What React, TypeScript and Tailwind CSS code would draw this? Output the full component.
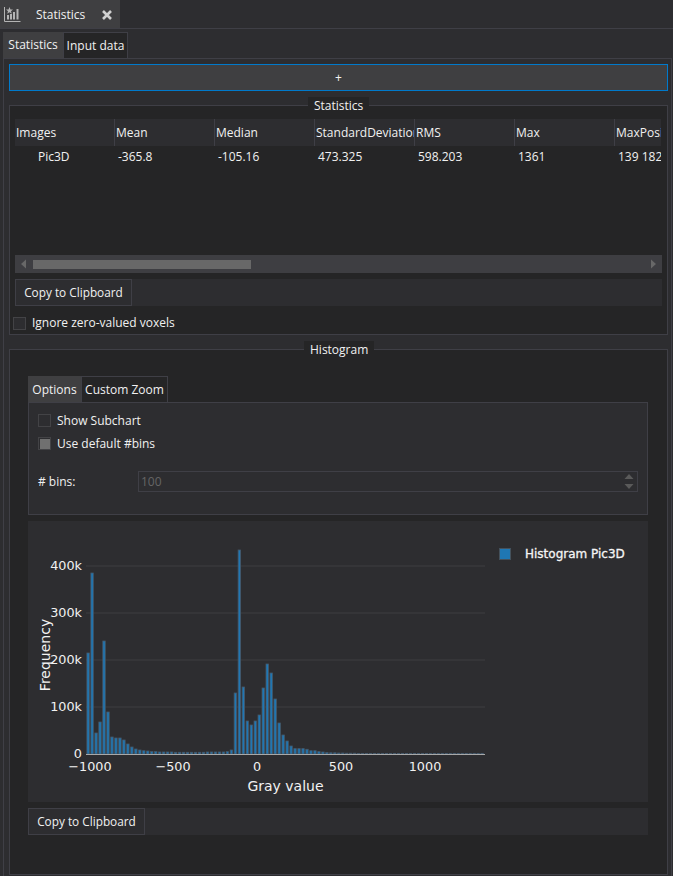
const COLUMNS = ['Images', 'Mean', 'Median', 'StandardDeviation', 'RMS', 'Max', 'MaxPosition']
const VALUES = ['Pic3D', '-365.8', '-105.16', '473.325', '598.203', '1361', '139 182 45']

// bar heights in px, read off the reference (one per bin)
const BARS = [
  101, 181, 21, 32, 113, 42, 17, 16, 16, 14, 10, 7, 5, 4, 3.3, 3, 2.4, 2.4, 2, 2, 2, 2, 1.7, 1.7, 1.7, 1.7, 1.7, 1.7, 1.7, 1.7, 2, 2, 2, 2, 2,
  2.4, 4, 61, 204, 67, 33, 29, 33, 39, 66, 90, 81, 55, 31, 19, 13, 8, 5.4, 5.4, 5.4, 4.7, 3.3, 3.3, 2.4, 2, 1.4, 1.2, 1.2, 1, 1, 0.8, 0.8, 0.8, 0.6, 0.6, 0.6,
  0.5, 0.5, 0.5, 0.5, 0.5, 0.5, 0.5, 0.5, 0.5, 0.5, 0.5, 0.5, 0.5, 0.5, 0.5, 0.5, 0.5, 0.5, 0.5, 0.5, 0.5, 0.5, 0.5, 0.5, 0.5, 0.5, 0.5, 0.5, 0.5,
]

const Y_TICKS = [
  { label: '0', y: 233 },
  { label: '100k', y: 186 },
  { label: '200k', y: 139 },
  { label: '300k', y: 92 },
  { label: '400k', y: 45 },
]

const X_TICKS = [
  { label: '−1000', x: 62 },
  { label: '−500', x: 145 },
  { label: '0', x: 229 },
  { label: '500', x: 313 },
  { label: '1000', x: 397 },
]

function Histogram() {
  return (
    <svg width="470" height="281" className="shrink-0 font-['DejaVu_Sans',sans-serif]">
      {Y_TICKS.slice(1).map((t) => (
        <line key={t.label} x1="58" x2="457" y1={t.y} y2={t.y} stroke="#38383b" strokeWidth="1.5" />
      ))}
      {BARS.map((h, i) => (
        <rect key={i} x={58.9 + i * 3.98} y={233 - h} width="2.4" height={h} fill="#1f77b4" stroke="#46596a" strokeWidth="0.8" />
      ))}
      <line x1="58" x2="457" y1="233.5" y2="233.5" stroke="#a8a8a8" strokeWidth="1.2" />
      {Y_TICKS.map((t) => (
        <text key={t.label} x="54" y={t.y + 3.5} textAnchor="end" fontSize="12.8" fill="#f2f2f2">{t.label}</text>
      ))}
      {X_TICKS.map((t) => (
        <text key={t.label} x={t.x} y="250" textAnchor="middle" fontSize="12.8" fill="#f2f2f2">{t.label}</text>
      ))}
      <text x="257.500" y="270" textAnchor="middle" fontSize="14" fill="#f2f2f2">Gray value</text>
      <text transform="translate(22 134) rotate(-90)" textAnchor="middle" fontSize="14" fill="#f2f2f2">Frequency</text>
    </svg>
  )
}

function CopyRow() {
  return (
    <div className="flex h-[27px] bg-[#2d2d30]">
      <button className="w-[117px] border border-[#3f3f46] text-[11.8px] text-[#f1f1f1]">Copy to Clipboard</button>
    </div>
  )
}

function Box({ checked }: { checked?: boolean }) {
  return (
    <span className="flex h-[13px] w-[13px] shrink-0 items-center justify-center border border-[#434346] bg-[#2d2d30]">
      {checked && <span className="h-[10px] w-[10px] bg-[#707070]" />}
    </span>
  )
}

function GroupTitle({ children, left }: { children: string; left: string }) {
  return (
    <span className={`absolute top-[-9px] bg-[#252526] px-[6px] text-[12px] leading-[18px] text-[#f1f1f1] ${left}`}>
      {children}
    </span>
  )
}

export default function App() {
  return (
    <div className="h-[876px] w-[673px] overflow-hidden bg-[#2d2d30] font-['Open_Sans',sans-serif] text-[12px] text-[#f1f1f1]">
      {/* dock tab */}
      <div className="flex h-[29px] items-end border-b border-[#3f3f46]">
        <div className="flex h-[28px] w-[120px] items-center bg-[#3f3f41] pt-[1px]">
          <svg width="18" height="17" viewBox="0 0 18 17" className="ml-[4px] -mt-[1px]" fill="none" stroke="#b4b4b4" strokeWidth="1">
            <path d="M.5 1v14.500H16.500" />
            <path d="M4 13.500V9M7 13.500V8M10 13.500V6M13.500 13.500V3" strokeWidth="2" />
            <path d="M5.500 1l1 2.500h2.500l-2 1.700.8 2.500-2.300-1.500-2.300 1.500.8-2.500-2-1.700h2.500z" fill="#b4b4b4" stroke="none" />
          </svg>
          <span className="ml-[14px] text-[12px]">Statistics</span>
          <svg width="10" height="10" viewBox="0 0 10 10" className="ml-[17px]" stroke="#d0d0d0" strokeWidth="2.600">
            <path d="M1 1l8 8M9 1l-8 8" />
          </svg>
        </div>
      </div>

      {/* main tabs */}
      <div className="ml-[3px] mt-[3px] flex h-[26px] text-[12px]">
        <div className="flex w-[60px] items-center justify-center bg-[#3f3f41]">Statistics</div>
        <div className="flex w-[65px] items-center justify-center border-x border-t border-[#3f3f46] bg-[#252526]">Input data</div>
      </div>

      <div className="ml-[3px] flex h-[830px] w-[669px] flex-col border-x border-t border-[#3f3f46] px-[5px] pt-[5px]">
        <button className="h-[27px] w-[659px] shrink-0 border border-[#007acc] bg-[#3f3f41] text-[12px] leading-none">+</button>

        {/* statistics group */}
        <section className="relative mt-[14px] flex h-[230px] w-[659px] shrink-0 flex-col border border-[#3f3f46] bg-[#252526] px-[5px] pt-[13px]">
          <GroupTitle left="left-[298px]">Statistics</GroupTitle>
          <div className="grid grid-cols-[repeat(6,100px)_46px] overflow-hidden">
            {COLUMNS.map((c, i) => (
              <div key={c} className={`flex h-[27px] items-center overflow-hidden whitespace-nowrap bg-[#2d2d30] pl-[1px] ${i < 6 ? 'border-r border-[#3f3f46]' : ''}`}>{c}</div>
            ))}
            {VALUES.map((v, i) => (
              <div key={v} className={`flex h-[21px] items-center overflow-hidden whitespace-nowrap ${i === 0 ? 'pl-[23px]' : 'pl-[3px]'}`}>{v}</div>
            ))}
          </div>
          {/* scrollbar */}
          <div className="mt-[88px] flex h-[18px] items-center bg-[#3e3e42]">
            <svg width="18" height="18" viewBox="0 0 18 18" className="shrink-0"><path d="M6 9l5-4.500v9z" fill="#686868" /></svg>
            <div className="h-[9px] w-[218px] bg-[#686868]" />
            <svg width="18" height="18" viewBox="0 0 18 18" className="ml-auto shrink-0"><path d="M12 9l-5-4.500v9z" fill="#686868" /></svg>
          </div>
          <div className="mt-[6px]"><CopyRow /></div>
          <label className="mt-[8px] -ml-[2px] flex items-center gap-[6px]">
            <Box />
            <span>Ignore zero-valued voxels</span>
          </label>
        </section>

        {/* histogram group */}
        <section className="relative mt-[14px] h-[526px] w-[659px] shrink-0 border border-[#3f3f46] bg-[#252526] px-[18px] pt-[26px]">
          <GroupTitle left="left-[294px]">Histogram</GroupTitle>
          <div className="flex h-[26px] text-[12px]">
            <div className="flex w-[53px] items-center justify-center bg-[#3f3f41] pt-[1px]">Options</div>
            <div className="flex w-[87px] items-center justify-center border-x border-t border-[#3f3f46] pt-[1px]">Custom Zoom</div>
          </div>
          <div className="flex h-[113px] w-[620px] flex-col border border-[#3f3f46] bg-[#2d2d30] pl-[9px] pt-[10px]">
            <label className="flex h-[15px] items-center gap-[6px]"><Box /><span>Show Subchart</span></label>
            <label className="mt-[8px] flex h-[15px] items-center gap-[6px]"><Box checked /><span>Use default #bins</span></label>
            <div className="mt-[20px] flex h-[21px] items-center">
              <span className="w-[100px]">{'# bins:'}</span>
              <div className="flex h-[21px] w-[500px] items-center justify-between border border-[#3f3f46] pl-[2px] pr-[3px] text-[#656565]">
                <span>100</span>
                <span className="flex flex-col gap-[5px] pb-[1px]">
                  <svg width="10" height="5" viewBox="0 0 10 5"><path d="M5 0l4.500 5H.5z" fill="#5a5a5a" /></svg>
                  <svg width="10" height="5" viewBox="0 0 10 5"><path d="M5 5l4.500-5H.5z" fill="#5a5a5a" /></svg>
                </span>
              </div>
            </div>
          </div>

          <div className="mt-[6px] flex h-[281px] w-[620px] bg-[#2d2d30]">
            <Histogram />
            <div className="ml-[1px] mt-[27px] flex h-[12px] items-center">
              <span className="h-[12px] w-[12px] border border-[#44515c] bg-[#1f77b4]" />
              <span className="ml-[14px] whitespace-nowrap font-['DejaVu_Sans',sans-serif] text-[12px] text-[#f5f5f5] [-webkit-text-stroke:0.3px_#f5f5f5]">Histogram Pic3D</span>
            </div>
          </div>

          <div className="mt-[6px] w-[620px]"><CopyRow /></div>
        </section>
      </div>
    </div>
  )
}
